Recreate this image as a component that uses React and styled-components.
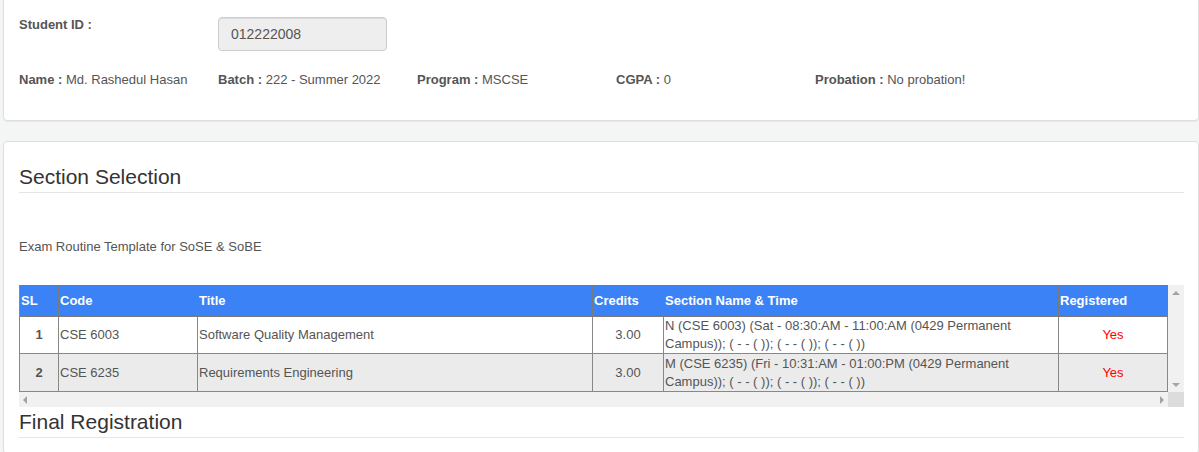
import React from "react";
import styled, { createGlobalStyle, css } from "styled-components";

const Global = createGlobalStyle`
  html, body { margin: 0; padding: 0; }
  body {
    background: #f4f5f5;
    font-family: "Liberation Sans", Arial, sans-serif;
    font-size: 13px;
    line-height: 1.42857;
    color: #555;
    overflow: hidden;
  }
`;

const Page = styled.div`
  width: 1199px;
  height: 452px;
  overflow: hidden;
  padding-left: 3px;
  box-sizing: border-box;
`;

const Panel = styled.section`
  box-sizing: border-box;
  width: 1196px;
  background: #fff;
  border: 1px solid #dedede;
  border-radius: 4px;
  box-shadow: 0 1px 1px rgba(0, 0, 0, 0.05);
  padding: ${(p) => p.$pad || "15px 14px 15px 15px"};
  margin-top: ${(p) => p.$mt || "0"};
`;

const InfoGrid = styled.div`
  display: grid;
  grid-template-columns: repeat(6, 199px);
  align-items: start;
  row-gap: ${(p) => p.$gap || "0"};
`;

const Label = styled.span`
  font-weight: bold;
  color: #555;
`;

const Value = styled.span`
  color: #555;
`;

const Field = styled.div`
  white-space: nowrap;
`;

const IdInput = styled.div`
  box-sizing: border-box;
  width: 169px;
  height: 34px;
  margin-top: 1px;
  padding: 6px 12px;
  font-size: 14px;
  line-height: 20px;
  color: #555;
  background: #eee;
  border: 1px solid #ccc;
  border-radius: 4px;
  box-shadow: inset 0 1px 1px rgba(0, 0, 0, 0.075);
`;

const Heading = styled.h3`
  margin: ${(p) => p.$mt || "0"} 0 0;
  padding-bottom: 4px;
  font-size: 21px;
  font-weight: normal;
  line-height: 23px;
  color: #333;
  border-bottom: 1px solid #e5e5e5;
`;

const Note = styled.p`
  margin: 45px 0 29px;
  color: #555;
`;

const ScrollFrame = styled.div`
  display: grid;
  grid-template-columns: 1149px 16px;
  grid-template-rows: 107px 15px;
  width: 1165px;
  background: #fff;
`;

const Viewport = styled.div`
  min-width: 0;
  overflow: hidden;
`;

const Track = styled.div`
  display: flex;
  flex-direction: ${(p) => (p.$vertical ? "column" : "row")};
  justify-content: space-between;
  align-items: center;
  padding: ${(p) => (p.$vertical ? "6px 0 5px" : "0 4px 0 4px")};
  background: #f1f1f1;
`;

const Corner = styled.div`
  background: #dcdcdc;
`;

const arrowShapes = {
  up: css`
    border-left: 4px solid transparent;
    border-right: 4px solid transparent;
    border-bottom: 4px solid #a3a3a3;
  `,
  down: css`
    border-left: 4px solid transparent;
    border-right: 4px solid transparent;
    border-top: 4px solid #a3a3a3;
  `,
  left: css`
    border-top: 4px solid transparent;
    border-bottom: 4px solid transparent;
    border-right: 4px solid #a3a3a3;
  `,
  right: css`
    border-top: 4px solid transparent;
    border-bottom: 4px solid transparent;
    border-left: 4px solid #a3a3a3;
  `,
};

const Arrow = styled.span`
  width: 0;
  height: 0;
  ${(p) => arrowShapes[p.$dir]}
`;

const Table = styled.table`
  width: 1149px;
  table-layout: fixed;
  border-collapse: separate;
  border-spacing: 0;
  border-top: 1px solid #7a7a7a;
  border-left: 1px solid #888;
  font-size: 13px;
`;

const HeadRow = styled.tr`
  height: 31px;
  background: #3b82f6;
`;

const Th = styled.th`
  box-sizing: border-box;
  color: #fff;
  font-weight: bold;
  text-align: left;
  padding: 0 1px;
  border-right: 1px solid #7a7a7a;
  border-bottom: 1px solid #7a7a7a;
  white-space: nowrap;
  line-height: 18px;
`;

const Row = styled.tr`
  height: ${(p) => p.$h}px;
  background: ${(p) => (p.$alt ? "#ebebeb" : "#fff")};
`;

const Td = styled.td`
  box-sizing: border-box;
  padding: 0 1px;
  border-right: 1px solid #888;
  border-bottom: 1px solid #888;
  color: ${(p) => (p.$red ? "#f00" : "#555")};
  text-align: ${(p) => p.$align || "left"};
  font-weight: ${(p) => (p.$bold ? "bold" : "normal")};
  vertical-align: middle;
  line-height: 18px;
`;

const cols = [39, 139, 395, 71, 395, 109];

const rows = [
  {
    sl: 1,
    code: "CSE 6003",
    title: "Software Quality Management",
    credits: "3.00",
    section:
      "N (CSE 6003) (Sat - 08:30:AM - 11:00:AM (0429 Permanent Campus)); ( - - ( )); ( - - ( )); ( - - ( ))",
    h: 37,
  },
  {
    sl: 2,
    code: "CSE 6235",
    title: "Requirements Engineering",
    credits: "3.00",
    section:
      "M (CSE 6235) (Fri - 10:31:AM - 01:00:PM (0429 Permanent Campus)); ( - - ( )); ( - - ( )); ( - - ( ))",
    h: 38,
  },
];

export default function App() {
  return (
    <Page>
      <Global />
      <Panel $mt="-5px" $pad="20px 14px 30px 15px">
        <InfoGrid $gap="20px">
          <Field>
            <Label>Student ID :</Label>
          </Field>
          <IdInput>012222008</IdInput>
          <span />
          <span />
          <span />
          <span />
          <Field>
            <Label>Name : </Label>
            <Value>Md. Rashedul Hasan</Value>
          </Field>
          <Field>
            <Label>Batch : </Label>
            <Value>222 - Summer 2022</Value>
          </Field>
          <Field>
            <Label>Program : </Label>
            <Value>MSCSE</Value>
          </Field>
          <Field>
            <Label>CGPA : </Label>
            <Value>0</Value>
          </Field>
          <Field>
            <Label>Probation : </Label>
            <Value>No probation!</Value>
          </Field>
        </InfoGrid>
      </Panel>
      <Panel $mt="20px" $pad="15px 14px 15px 15px">
        <Heading $mt="8px">Section Selection</Heading>
        <Note>Exam Routine Template for SoSE &amp; SoBE</Note>
        <ScrollFrame>
          <Viewport>
            <Table>
              <colgroup>
                {cols.map((w, i) => (
                  <col key={i} style={{ width: w }} />
                ))}
              </colgroup>
              <thead>
                <HeadRow>
                  <Th>SL</Th>
                  <Th>Code</Th>
                  <Th>Title</Th>
                  <Th>Credits</Th>
                  <Th>Section Name &amp; Time</Th>
                  <Th>Registered</Th>
                </HeadRow>
              </thead>
              <tbody>
                {rows.map((r, i) => (
                  <Row key={r.sl} $alt={i % 2 === 1} $h={r.h}>
                    <Td $align="center" $bold>
                      {r.sl}
                    </Td>
                    <Td>{r.code}</Td>
                    <Td>{r.title}</Td>
                    <Td $align="center">{r.credits}</Td>
                    <Td>{r.section}</Td>
                    <Td $align="center" $red>
                      Yes
                    </Td>
                  </Row>
                ))}
              </tbody>
            </Table>
          </Viewport>
          <Track $vertical>
            <Arrow $dir="up" />
            <Arrow $dir="down" />
          </Track>
          <Track>
            <Arrow $dir="left" />
            <Arrow $dir="right" />
          </Track>
          <Corner />
        </ScrollFrame>
        <Heading $mt="3px">Final Registration</Heading>
      </Panel>
    </Page>
  );
}
